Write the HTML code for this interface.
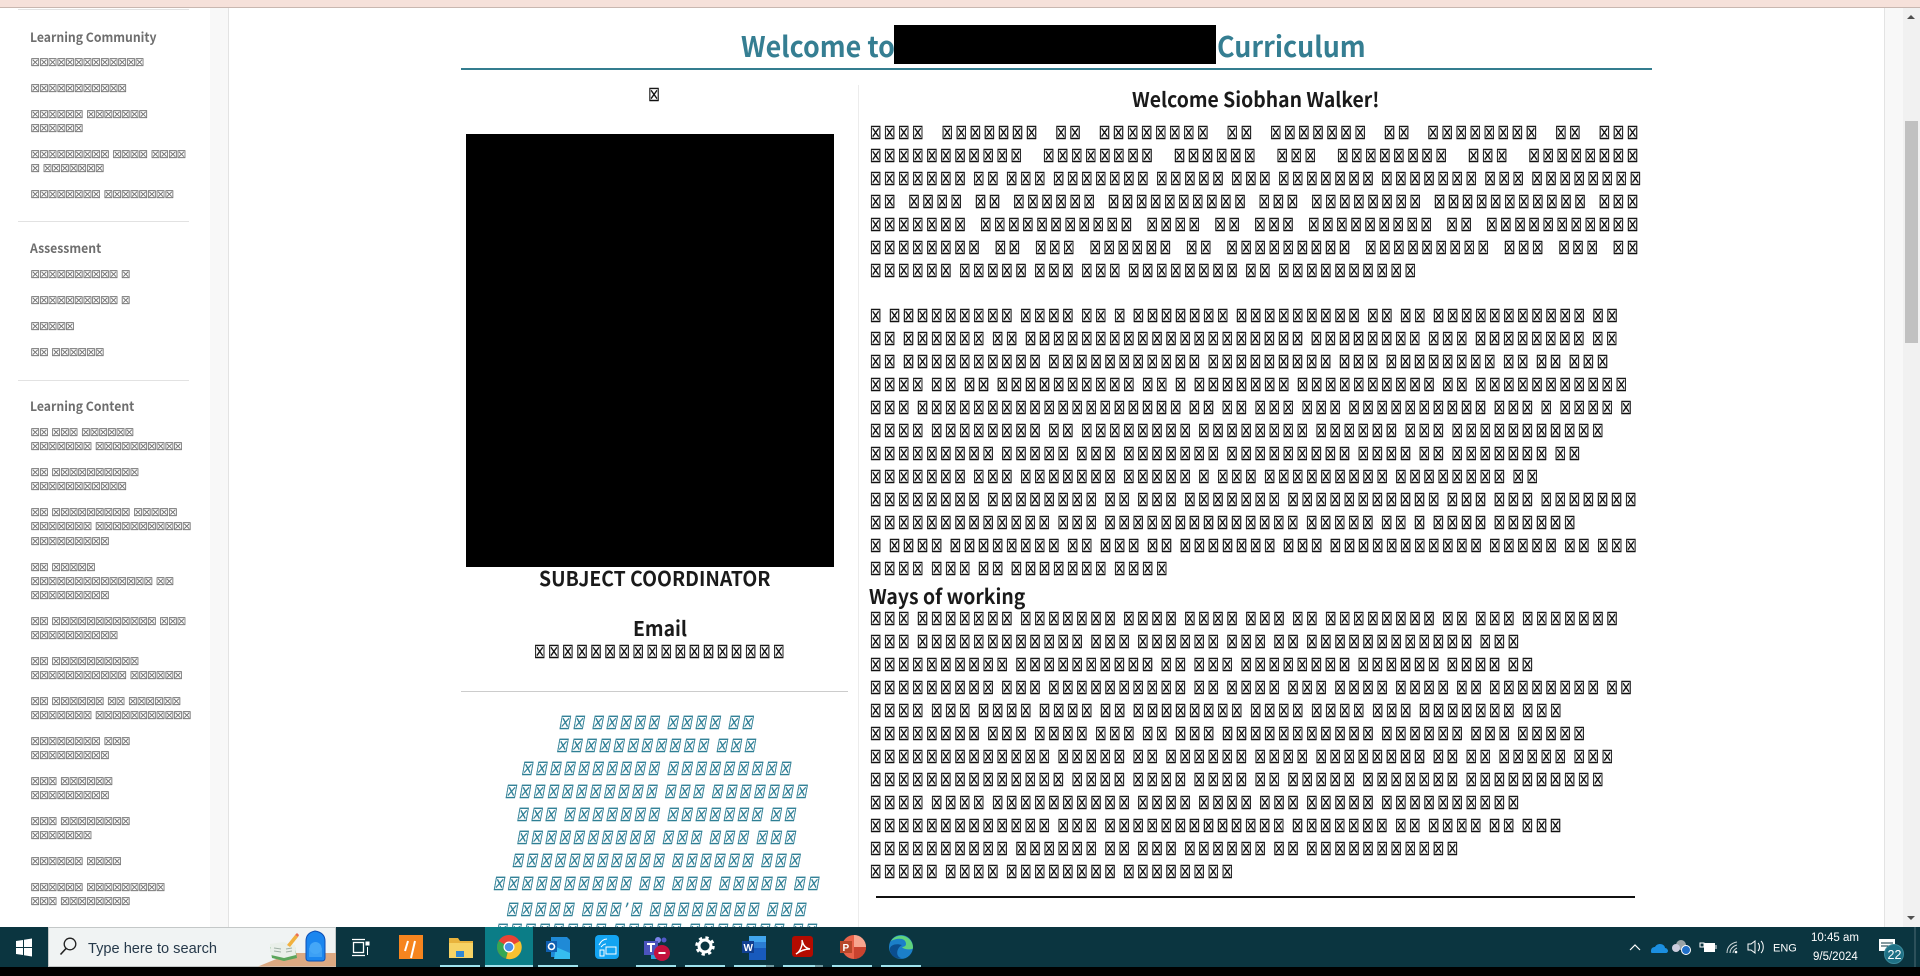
<!DOCTYPE html>
<html lang="en"><head><meta charset="utf-8"><title>Curriculum</title>
<style>
html,body{margin:0;padding:0;width:1920px;height:976px;overflow:hidden;background:#fff}
*{box-sizing:border-box}
body{position:relative;font-family:"Noto Sans CJK JP","Liberation Sans",sans-serif;color:#1a1a1a}
.a{position:absolute}
.sc{position:absolute;top:1px;transform:scaleX(.704);transform-origin:0 0;font-family:"DejaVu Sans",sans-serif;font-size:18px;letter-spacing:3.83px;word-spacing:-2.79px;line-height:14px;color:#111;-webkit-text-stroke:.5px #111}
.sc div{position:absolute;left:0;width:100%;white-space:nowrap}
.sc div.j{white-space:normal;text-align:justify;text-align-last:justify}
#lc{left:466.400px;width:545px;text-align:center}
#lc .t{color:#2f7f95;-webkit-text-stroke:.4px #2f7f95;transform:skewX(-14deg)}
#rc{left:870px;width:1095px}
.s{position:absolute;left:30.500px;margin-top:1px;font-family:"DejaVu Sans",sans-serif;font-size:10.500px;letter-spacing:-.71px;word-spacing:.9px;line-height:9px;color:#707070;-webkit-text-stroke:.25px #707070;white-space:nowrap}
.h{position:absolute;left:30px;font-size:13px;font-weight:700;color:#6e6e6e;line-height:16px;white-space:nowrap;transform:scaleX(.94);transform-origin:0 0}
.hr{position:absolute;left:18px;width:171px;height:1px;background:#e2e2e2}
.b{position:absolute;font-weight:700;white-space:nowrap;line-height:26px;color:#1a1a1a;font-size:20.500px;transform:scaleX(.945);transform-origin:0 0}
.ti{font-size:28.300px;line-height:40px;color:#357e92;transform:scaleX(.949)}
#tb{position:absolute;left:0;top:927px;width:1920px;height:40px;background:#0b3540;overflow:hidden}
.u{position:absolute;top:965px;height:2px;background:#9fe3ee}
svg{position:absolute;overflow:visible}
</style></head><body>
<div class="a" style="left:0;top:0;width:1920px;height:8px;background:#f6e1da;border-bottom:1px solid #c9b7b0"></div>
<div class="a" style="left:210px;top:8px;width:18px;height:919px;background:#f8f8f8"></div>
<div class="a" style="left:228px;top:8px;width:1px;height:919px;background:#e3e3e3"></div>
<div class="a" style="left:1884px;top:8px;width:19px;height:919px;background:#f8f8f8;border-left:1px solid #e3e3e3"></div>
<div class="a" style="left:1903px;top:8px;width:17px;height:919px;background:#f1f1f1"></div>
<div class="a" style="left:1905px;top:121px;width:13px;height:222px;background:#c1c1c1"></div>
<svg style="left:0;top:0" width="1" height="1"><path d="M1907 19l4-4 4 4z" fill="#505050"/><path d="M1907 916l4 4 4-4z" fill="#505050"/></svg>

<div class="hr" style="top:9px"></div>
<div class="h" style="top:29px">Learning Community</div>
<div class="s" style="top:58px">☒☒☒☒☒☒☒☒☒☒☒☒☒</div>
<div class="s" style="top:84px">☒☒☒☒☒☒☒☒☒☒☒</div>
<div class="s" style="top:110px">☒☒☒☒☒☒ ☒☒☒☒☒☒☒</div>
<div class="s" style="top:124px">☒☒☒☒☒☒</div>
<div class="s" style="top:150px">☒☒☒☒☒☒☒☒☒ ☒☒☒☒ ☒☒☒☒</div>
<div class="s" style="top:164px">☒ ☒☒☒☒☒☒☒</div>
<div class="s" style="top:190px">☒☒☒☒☒☒☒☒ ☒☒☒☒☒☒☒☒</div>
<div class="hr" style="top:221px"></div>
<div class="h" style="top:240px">Assessment</div>
<div class="s" style="top:270px">☒☒☒☒☒☒☒☒☒☒ ☒</div>
<div class="s" style="top:296px">☒☒☒☒☒☒☒☒☒☒ ☒</div>
<div class="s" style="top:322px">☒☒☒☒☒</div>
<div class="s" style="top:348px">☒☒ ☒☒☒☒☒☒</div>
<div class="hr" style="top:380px"></div>
<div class="h" style="top:398px">Learning Content</div>
<div class="s" style="top:428px">☒☒ ☒☒☒ ☒☒☒☒☒☒</div>
<div class="s" style="top:442px">☒☒☒☒☒☒☒ ☒☒☒☒☒☒☒☒☒☒</div>
<div class="s" style="top:468px">☒☒ ☒☒☒☒☒☒☒☒☒☒</div>
<div class="s" style="top:482px">☒☒☒☒☒☒☒☒☒☒☒</div>
<div class="s" style="top:508px">☒☒ ☒☒☒☒☒☒☒☒☒ ☒☒☒☒☒</div>
<div class="s" style="top:522px">☒☒☒☒☒☒☒ ☒☒☒☒☒☒☒☒☒☒☒</div>
<div class="s" style="top:537px">☒☒☒☒☒☒☒☒☒</div>
<div class="s" style="top:563px">☒☒ ☒☒☒☒☒</div>
<div class="s" style="top:577px">☒☒☒☒☒☒☒☒☒☒☒☒☒☒ ☒☒</div>
<div class="s" style="top:591px">☒☒☒☒☒☒☒☒☒</div>
<div class="s" style="top:617px">☒☒ ☒☒☒☒☒☒☒☒☒☒☒☒ ☒☒☒</div>
<div class="s" style="top:631px">☒☒☒☒☒☒☒☒☒☒</div>
<div class="s" style="top:657px">☒☒ ☒☒☒☒☒☒☒☒☒☒</div>
<div class="s" style="top:671px">☒☒☒☒☒☒☒☒☒☒☒ ☒☒☒☒☒☒</div>
<div class="s" style="top:697px">☒☒ ☒☒☒☒☒☒ ☒☒ ☒☒☒☒☒☒</div>
<div class="s" style="top:711px">☒☒☒☒☒☒☒ ☒☒☒☒☒☒☒☒☒☒☒</div>
<div class="s" style="top:737px">☒☒☒☒☒☒☒☒ ☒☒☒</div>
<div class="s" style="top:751px">☒☒☒☒☒☒☒☒☒</div>
<div class="s" style="top:777px">☒☒☒ ☒☒☒☒☒☒</div>
<div class="s" style="top:791px">☒☒☒☒☒☒☒☒☒</div>
<div class="s" style="top:817px">☒☒☒ ☒☒☒☒☒☒☒☒</div>
<div class="s" style="top:831px">☒☒☒☒☒☒☒</div>
<div class="s" style="top:857px">☒☒☒☒☒☒ ☒☒☒☒</div>
<div class="s" style="top:883px">☒☒☒☒☒☒ ☒☒☒☒☒☒☒☒☒</div>
<div class="s" style="top:897px">☒☒☒ ☒☒☒☒☒☒☒☒</div>

<div class="b ti" style="left:741px;top:26px">Welcome to</div>
<div class="a" style="left:894px;top:25px;width:322px;height:39px;background:#000"></div>
<div class="b ti" style="left:1217px;top:26px">Curriculum</div>
<div class="a" style="left:461px;top:68px;width:1191px;height:2px;background:#347d8f"></div>
<div class="a" style="left:858px;top:85px;width:1px;height:842px;background:#ececec"></div>
<div class="a" style="left:466px;top:134px;width:368px;height:433px;background:#000"></div>
<div class="b" style="left:539px;top:564px">SUBJECT COORDINATOR</div>
<div class="b" style="left:633px;top:614px">Email</div>
<div class="a" style="left:461px;top:691px;width:387px;height:1px;background:#ccc"></div>
<div class="b" style="left:1132px;top:85px">Welcome Siobhan Walker!</div>
<div class="b" style="left:869px;top:581.500px">Ways of working</div>
<div class="a" style="left:876px;top:896px;width:759px;height:2px;background:#111"></div>

<div class="sc" id="lc">
<div style="top:88px;left:-3.500px">☒</div>
<div style="top:645px;left:4px">☒☒☒☒☒☒☒☒☒☒☒☒☒☒☒☒☒☒</div>
<div class="t" style="top:716px">☒☒ ☒☒☒☒☒ ☒☒☒☒ ☒☒</div>
<div class="t" style="top:739px">☒☒☒☒☒☒☒☒☒☒☒ ☒☒☒</div>
<div class="t" style="top:762px">☒☒☒☒☒☒☒☒☒☒ ☒☒☒☒☒☒☒☒☒</div>
<div class="t" style="top:785px">☒☒☒☒☒☒☒☒☒☒☒ ☒☒☒ ☒☒☒☒☒☒☒</div>
<div class="t" style="top:808px">☒☒☒ ☒☒☒☒☒☒☒ ☒☒☒☒☒☒☒ ☒☒</div>
<div class="t" style="top:831px">☒☒☒☒☒☒☒☒☒☒ ☒☒☒ ☒☒☒ ☒☒☒</div>
<div class="t" style="top:854px">☒☒☒☒☒☒☒☒☒☒☒ ☒☒☒☒☒☒ ☒☒☒</div>
<div class="t" style="top:877px">☒☒☒☒☒☒☒☒☒☒ ☒☒ ☒☒☒ ☒☒☒☒☒ ☒☒</div>
<div class="t" style="top:903px">☒☒☒☒☒ ☒☒☒’☒ ☒☒☒☒☒☒☒☒ ☒☒☒</div>
<div class="t" style="top:924px">☒☒☒☒☒☒☒☒ ☒☒☒☒☒ ☒☒☒☒☒☒☒ ☒☒</div>
</div>

<div class="sc" id="rc">
<div class="j" style="top:126px">☒☒☒☒ ☒☒☒☒☒☒☒ ☒☒ ☒☒☒☒☒☒☒☒ ☒☒ ☒☒☒☒☒☒☒ ☒☒ ☒☒☒☒☒☒☒☒ ☒☒ ☒☒☒</div>
<div class="j" style="top:149px">☒☒☒☒☒☒☒☒☒☒☒ ☒☒☒☒☒☒☒☒ ☒☒☒☒☒☒ ☒☒☒ ☒☒☒☒☒☒☒☒ ☒☒☒ ☒☒☒☒☒☒☒☒</div>
<div style="top:172px">☒☒☒☒☒☒☒ ☒☒ ☒☒☒ ☒☒☒☒☒☒☒ ☒☒☒☒☒ ☒☒☒ ☒☒☒☒☒☒☒ ☒☒☒☒☒☒☒ ☒☒☒ ☒☒☒☒☒☒☒☒</div>
<div class="j" style="top:195px">☒☒ ☒☒☒☒ ☒☒ ☒☒☒☒☒☒ ☒☒☒☒☒☒☒☒☒☒ ☒☒☒ ☒☒☒☒☒☒☒☒ ☒☒☒☒☒☒☒☒☒☒☒ ☒☒☒</div>
<div class="j" style="top:218px">☒☒☒☒☒☒☒ ☒☒☒☒☒☒☒☒☒☒☒ ☒☒☒☒ ☒☒ ☒☒☒ ☒☒☒☒☒☒☒☒☒ ☒☒ ☒☒☒☒☒☒☒☒☒☒☒</div>
<div class="j" style="top:241px">☒☒☒☒☒☒☒☒ ☒☒ ☒☒☒ ☒☒☒☒☒☒ ☒☒ ☒☒☒☒☒☒☒☒☒ ☒☒☒☒☒☒☒☒☒ ☒☒☒ ☒☒☒ ☒☒</div>
<div style="top:264px">☒☒☒☒☒☒ ☒☒☒☒☒ ☒☒☒ ☒☒☒ ☒☒☒☒☒☒☒☒ ☒☒ ☒☒☒☒☒☒☒☒☒☒</div>

<div style="top:309px">☒ ☒☒☒☒☒☒☒☒☒ ☒☒☒☒ ☒☒ ☒ ☒☒☒☒☒☒☒ ☒☒☒☒☒☒☒☒☒ ☒☒ ☒☒ ☒☒☒☒☒☒☒☒☒☒☒ ☒☒</div>
<div style="top:332px">☒☒ ☒☒☒☒☒☒ ☒☒ ☒☒☒☒☒☒☒☒☒☒☒☒☒☒☒☒☒☒☒☒ ☒☒☒☒☒☒☒☒ ☒☒☒ ☒☒☒☒☒☒☒☒ ☒☒</div>
<div style="top:355px">☒☒ ☒☒☒☒☒☒☒☒☒☒ ☒☒☒☒☒☒☒☒☒☒☒ ☒☒☒☒☒☒☒☒☒ ☒☒☒ ☒☒☒☒☒☒☒☒ ☒☒ ☒☒ ☒☒☒</div>
<div style="top:378px">☒☒☒☒ ☒☒ ☒☒ ☒☒☒☒☒☒☒☒☒☒ ☒☒ ☒ ☒☒☒☒☒☒☒ ☒☒☒☒☒☒☒☒☒☒ ☒☒ ☒☒☒☒☒☒☒☒☒☒☒</div>
<div style="top:401px">☒☒☒ ☒☒☒☒☒☒☒☒☒☒☒☒☒☒☒☒☒☒☒ ☒☒ ☒☒ ☒☒☒ ☒☒☒ ☒☒☒☒☒☒☒☒☒☒ ☒☒☒ ☒ ☒☒☒☒ ☒</div>
<div style="top:424px">☒☒☒☒ ☒☒☒☒☒☒☒☒ ☒☒ ☒☒☒☒☒☒☒☒ ☒☒☒☒☒☒☒☒ ☒☒☒☒☒☒ ☒☒☒ ☒☒☒☒☒☒☒☒☒☒☒</div>
<div style="top:447px">☒☒☒☒☒☒☒☒☒ ☒☒☒☒☒ ☒☒☒ ☒☒☒☒☒☒☒ ☒☒☒☒☒☒☒☒☒ ☒☒☒☒ ☒☒ ☒☒☒☒☒☒☒ ☒☒</div>
<div style="top:470px">☒☒☒☒☒☒☒ ☒☒☒ ☒☒☒☒☒☒☒ ☒☒☒☒☒ ☒ ☒☒☒ ☒☒☒☒☒☒☒☒☒ ☒☒☒☒☒☒☒☒ ☒☒</div>
<div style="top:493px">☒☒☒☒☒☒☒☒ ☒☒☒☒☒☒☒☒ ☒☒ ☒☒☒ ☒☒☒☒☒☒☒ ☒☒☒☒☒☒☒☒☒☒☒ ☒☒☒ ☒☒☒ ☒☒☒☒☒☒☒</div>
<div style="top:516px">☒☒☒☒☒☒☒☒☒☒☒☒☒ ☒☒☒ ☒☒☒☒☒☒☒☒☒☒☒☒☒☒ ☒☒☒☒☒ ☒☒ ☒ ☒☒☒☒ ☒☒☒☒☒☒</div>
<div style="top:539px">☒ ☒☒☒☒ ☒☒☒☒☒☒☒☒ ☒☒ ☒☒☒ ☒☒ ☒☒☒☒☒☒☒ ☒☒☒ ☒☒☒☒☒☒☒☒☒☒☒ ☒☒☒☒☒ ☒☒ ☒☒☒</div>
<div style="top:562px">☒☒☒☒ ☒☒☒ ☒☒ ☒☒☒☒☒☒☒ ☒☒☒☒</div>

<div style="top:612px">☒☒☒ ☒☒☒☒☒☒☒ ☒☒☒☒☒☒☒ ☒☒☒☒ ☒☒☒☒ ☒☒☒ ☒☒ ☒☒☒☒☒☒☒☒ ☒☒ ☒☒☒ ☒☒☒☒☒☒☒</div>
<div style="top:635px">☒☒☒ ☒☒☒☒☒☒☒☒☒☒☒☒ ☒☒☒ ☒☒☒☒☒☒ ☒☒☒ ☒☒ ☒☒☒☒☒☒☒☒☒☒☒☒ ☒☒☒</div>
<div style="top:658px">☒☒☒☒☒☒☒☒☒☒ ☒☒☒☒☒☒☒☒☒☒ ☒☒ ☒☒☒ ☒☒☒☒☒☒☒☒ ☒☒☒☒☒☒ ☒☒☒☒ ☒☒</div>
<div style="top:681px">☒☒☒☒☒☒☒☒☒ ☒☒☒ ☒☒☒☒☒☒☒☒☒☒ ☒☒ ☒☒☒☒ ☒☒☒ ☒☒☒☒ ☒☒☒☒ ☒☒ ☒☒☒☒☒☒☒☒ ☒☒</div>
<div style="top:704px">☒☒☒☒ ☒☒☒ ☒☒☒☒ ☒☒☒☒ ☒☒ ☒☒☒☒☒☒☒☒ ☒☒☒☒ ☒☒☒☒ ☒☒☒ ☒☒☒☒☒☒☒ ☒☒☒</div>
<div style="top:727px">☒☒☒☒☒☒☒☒ ☒☒☒ ☒☒☒☒ ☒☒☒ ☒☒ ☒☒☒ ☒☒☒☒☒☒☒☒☒☒☒ ☒☒☒☒☒☒ ☒☒☒ ☒☒☒☒☒</div>
<div style="top:750px">☒☒☒☒☒☒☒☒☒☒☒☒☒ ☒☒☒☒☒ ☒☒ ☒☒☒☒☒☒ ☒☒☒☒ ☒☒☒☒☒☒☒☒ ☒☒ ☒☒ ☒☒☒☒☒ ☒☒☒</div>
<div style="top:773px">☒☒☒☒☒☒☒☒☒☒☒☒☒☒ ☒☒☒☒ ☒☒☒☒ ☒☒☒☒ ☒☒ ☒☒☒☒☒ ☒☒☒☒☒☒☒ ☒☒☒☒☒☒☒☒☒☒</div>
<div style="top:796px">☒☒☒☒ ☒☒☒☒ ☒☒☒☒☒☒☒☒☒☒ ☒☒☒☒ ☒☒☒☒ ☒☒☒ ☒☒☒☒☒ ☒☒☒☒☒☒☒☒☒☒</div>
<div style="top:819px">☒☒☒☒☒☒☒☒☒☒☒☒☒ ☒☒☒ ☒☒☒☒☒☒☒☒☒☒☒☒☒ ☒☒☒☒☒☒☒ ☒☒ ☒☒☒☒ ☒☒ ☒☒☒</div>
<div style="top:842px">☒☒☒☒☒☒☒☒☒☒ ☒☒☒☒☒☒ ☒☒ ☒☒☒ ☒☒☒☒☒☒ ☒☒ ☒☒☒☒☒☒☒☒☒☒☒</div>
<div style="top:865px">☒☒☒☒☒ ☒☒☒☒ ☒☒☒☒☒☒☒☒ ☒☒☒☒☒☒☒☒</div>
</div>

<div id="tb"></div>
<div class="a" style="left:0;top:967px;width:1920px;height:9px;background:#000"></div>
<div class="a" style="left:48px;top:927px;width:288px;height:40px;background:#f0f3f3;border:1px solid #c4c8c8"></div>
<div class="a" style="left:485px;top:927px;width:48px;height:40px;background:#0b7d87"></div>
<div class="a" style="left:88px;top:938.500px;font:14.600px/20px 'Liberation Sans',sans-serif;color:#26394a;white-space:nowrap">Type here to search</div>

<div class="u" style="left:440px;width:40px"></div><div class="u" style="left:485px;width:48px"></div>
<div class="u" style="left:538px;width:40px"></div><div class="u" style="left:636px;width:40px"></div>
<div class="u" style="left:685px;width:40px"></div><div class="u" style="left:734px;width:32px"></div>
<div class="u" style="left:766px;width:8px;background:#6f9aa2"></div>
<div class="u" style="left:783px;width:32px"></div><div class="u" style="left:815px;width:8px;background:#6f9aa2"></div>
<div class="u" style="left:832px;width:40px"></div><div class="u" style="left:881px;width:40px"></div>

<svg style="left:0;top:0" width="1920" height="976" viewBox="0 0 1920 976">
<!-- windows -->
<path d="M16 941l7-1v7h-7zM24 939.800l8-1.300v8.500h-8zM16 948h7v7l-7-1zM24 948h8v8.500l-8-1.300z" fill="#fff"/>
<!-- magnifier -->
<circle cx="70" cy="944" r="5.800" fill="none" stroke="#222" stroke-width="1.300"/><path d="M66 948.500L60.500 954.500" stroke="#222" stroke-width="1.600"/>
<!-- table, book, pencil, backpack -->
<path d="M258 966.500L291 953H336V966.500z" fill="#dca982"/>
<path d="M270 947l13-3 12 3 2 11-13 3-12-3z" fill="#5aa55b"/>
<path d="M270 944l13-2 12 3 1 10-12 3-13-3z" fill="#e9efe9"/>
<path d="M274 948l7 1M274 951l7 1M286 949l6-1M286 952l6-1" stroke="#9fb0a4"/>
<path d="M287 945l8-10 3 2-8 10z" fill="#f1b13f"/><path d="M295 935l2-2 2 2-1 2z" fill="#ec6f4f"/>
<path d="M306 941c0-6 4-9 9-10 6 1 10 4 10 10v17c0 2-1 3-3 3h-13c-2 0-3-1-3-3z" fill="#1b86ef" stroke="#0d4fb5" stroke-width="1"/>
<path d="M309 948h13v9h-13z" fill="#3da0f5"/><circle cx="315.500" cy="948" r="6" fill="#45a7f7"/>
<!-- task view -->
<g fill="none" stroke="#fff" stroke-width="1.300"><rect x="353.500" y="942.500" width="10" height="10"/><path d="M352 939.500h13M352 955.500h13"/></g><path d="M366 942h3v3h-3zM367.500 947v8" fill="#fff" stroke="#fff"/>
<!-- iJ -->
<rect x="399" y="935" width="24" height="24" fill="#f6851f"/><path d="M408 941l-3 10M415 941l-4 17" stroke="#fff" stroke-width="2" fill="none"/>
<!-- folder -->
<path d="M449 938h9l2 3h13v16h-24z" fill="#e8b33d"/><path d="M449 943h24v15h-24z" fill="#f6d365"/><path d="M456 951h8v6h-8z" fill="#2f87d3"/>
<!-- chrome -->
<circle cx="509" cy="947" r="12" fill="#ea4335"/><path d="M509 947L520 941A12 12 0 0 1 506 958.600z" fill="#f8c12f"/><path d="M509 947L506 958.600A12 12 0 0 1 498.600 941z" fill="#34a853"/><circle cx="509" cy="947" r="5.500" fill="#fff"/><circle cx="509" cy="947" r="4.300" fill="#4a90e8"/>
<!-- outlook -->
<path d="M551 937h16l3 3v17h-19z" fill="#1f8ad6"/><path d="M556 947l14 6v6h-16z" fill="#36bdf0"/><rect x="546" y="941" width="11" height="11" fill="#0f5fb0"/><circle cx="551.500" cy="946.500" r="3" fill="none" stroke="#fff" stroke-width="1.600"/>
<!-- blue app -->
<rect x="595" y="935" width="24" height="24" rx="4" fill="#13a4f2"/><path d="M599 945c2-4 5-6 8-6M601 947c2-2 3-3 5-3" stroke="#fff" fill="none"/><rect x="606" y="947" width="10" height="7" fill="none" stroke="#fff"/><rect x="600" y="950" width="4" height="6" fill="none" stroke="#fff"/>
<!-- teams -->
<circle cx="658" cy="940" r="3" fill="#7b83eb"/><circle cx="664" cy="940" r="2.500" fill="#5059c9"/><rect x="644" y="941" width="14" height="14" fill="#4b53bc"/><path d="M647 944h8M651 944v8" stroke="#fff" stroke-width="2"/><rect x="651" y="955" width="7" height="4" fill="#2aa1dc"/>
<circle cx="662" cy="953" r="8" fill="#c4113e"/><path d="M658.500 953h7" stroke="#fff" stroke-width="2"/>
<!-- gear -->
<circle cx="705" cy="946" r="6" fill="none" stroke="#fff" stroke-width="3"/><circle cx="705" cy="946" r="8.500" fill="none" stroke="#fff" stroke-width="2.500" stroke-dasharray="3.300 3.400"/>
<!-- word -->
<path d="M749 936h17v24h-17z" fill="#185abd"/><path d="M749 936h17v6h-17z" fill="#41a5ee"/><path d="M749 942h17v6h-17z" fill="#2b7cd3"/><rect x="742" y="941" width="12" height="12" fill="#103f91"/><text x="743.500" y="951" font-family="Liberation Sans,sans-serif" font-size="10" font-weight="700" fill="#fff">W</text>
<!-- acrobat -->
<rect x="792" y="936" width="21" height="21" rx="3" fill="#b30b00"/><path d="M796 954c4-2 7-9 6-14 1 5 3 8 8 9-5 0-10 2-14 5z" fill="none" stroke="#fff" stroke-width="1.500"/>
<!-- ppt -->
<circle cx="854" cy="947" r="12" fill="#e8634a"/><path d="M854 935a12 12 0 0 1 12 12h-12z" fill="#f7a58f"/><path d="M854 947h12a12 12 0 0 1-12 12z" fill="#c9432f"/><rect x="840" y="941" width="12" height="12" fill="#b7472a"/><text x="842.500" y="951" font-family="Liberation Sans,sans-serif" font-size="10" font-weight="700" fill="#fff">P</text>
<!-- edge -->
<circle cx="901" cy="947" r="12" fill="#1b7fc9"/><path d="M913 948a12 12 0 0 0-22-7c5-3 15-4 15 3 0 3-4 3-4 3 2 3 11 3 11 1z" fill="#5fd37c"/><path d="M890 948c-1 7 6 12 13 10-7 1-8-9-1-13-6-2-11 0-12 3z" fill="#0b4e8f"/>
<!-- tray -->
<path d="M1630 950l5-5 5 5" fill="none" stroke="#fff" stroke-width="1.200"/>
<path d="M1651 951c0-3 2-4 4-4 1-2 3-3 5-3 3 0 5 2 5 4 2 0 3 2 3 3 0 1-1 2-2 2h-14c-1 0-1-1-1-2z" fill="#1b8fe0"/>
<circle cx="1681" cy="945" r="5" fill="#9aa3a6"/><circle cx="1676" cy="948" r="4" fill="#ccd"/><circle cx="1686" cy="950" r="4.500" fill="#1f6fc9" stroke="#fff"/>
<path d="M1700 943v4h4v-4zM1704 945h2" fill="none" stroke="#fff"/><rect x="1704.500" y="943.500" width="10" height="8" fill="#fff" stroke="#fff"/><path d="M1716 945v4" stroke="#fff"/>
<path d="M1727 953c0-6 4-10 10-11M1730 953c0-4 3-7 7-8M1733 953c0-2 2-4 4-5" fill="none" stroke="#cfd8da"/><circle cx="1736" cy="952" r="1.300" fill="#fff"/>
<path d="M1748 944h3l4-3v12l-4-3h-3z" fill="none" stroke="#fff"/><path d="M1758 943c2 2 2 6 0 8M1761 941c3 3 3 9 0 12" fill="none" stroke="#fff"/>
<text x="1773" y="951.500" font-family="Liberation Sans,sans-serif" font-size="11" fill="#fff">ENG</text>
<text x="1811" y="941" font-family="Liberation Sans,sans-serif" font-size="11.500" fill="#fff">10:45 am</text>
<text x="1813" y="960" font-family="Liberation Sans,sans-serif" font-size="11.500" fill="#fff">9/5/2024</text>
<path d="M1879 939h16v12h-16z" fill="#fff"/><path d="M1881 943h12M1881 946h12" stroke="#0b3540"/>
<circle cx="1894" cy="954" r="9.500" fill="#1f7186" stroke="#3b8b9c"/>
<text x="1887.500" y="959" font-family="Liberation Sans,sans-serif" font-size="12.500" fill="#fff">22</text>
<path d="M1915 927v40" stroke="#4c6c75"/>
</svg>
</body></html>
